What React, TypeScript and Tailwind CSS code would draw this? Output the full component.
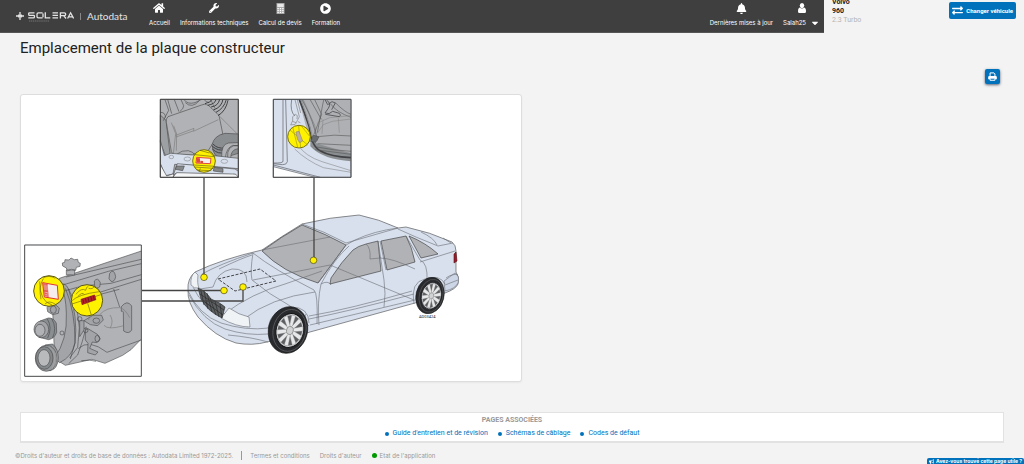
import type { ReactNode } from "react";
import { FaHome, FaWrench, FaPlayCircle, FaBell, FaCaretDown, FaExchangeAlt, FaBullhorn } from "react-icons/fa";

function NavItem({ icon, label }: { icon: ReactNode; label: ReactNode }) {
  return (
    <a href="#" className="flex flex-col items-center gap-1 text-white">
      <span className="flex h-3 items-center text-[12px]">{icon}</span>
      <span className="flex h-[9px] items-center gap-1 whitespace-nowrap font-[Inter,sans-serif] text-[6px] leading-[7px]">{label}</span>
    </a>
  );
}

function CalculatorIcon() {
  return (
    <svg viewBox="0 0 9 11" className="h-[11px] w-[9px]">
      <path d="M.5 0H8.5V11H.5Z" fill="#a9a9a9" />
      <path d="M1.3 1H7.7V4H1.3Z" fill="#e8e8e8" />
      <path d="M1.4 5.6H7.6M1.4 7.5H7.6M1.4 9.4H7.6" stroke="#fff" strokeWidth="1.1" strokeDasharray="1.4 1" />
    </svg>
  );
}

function UserIcon() {
  return (
    <svg viewBox="0 0 8 10" className="h-[10px] w-2" fill="currentColor">
      <ellipse cx="4" cy="2.6" rx="2.2" ry="2.6" />
      <path d="M1.8 4.6Q4 6.6 6.2 4.6Q8 5 8 8.4Q8 10 6.6 10H1.4Q0 10 0 8.4Q0 5 1.8 4.6Z" />
    </svg>
  );
}

function PrintIcon() {
  return (
    <svg viewBox="0 0 10 10" className="h-[9px] w-[9px]" fill="none" stroke="currentColor" strokeWidth="1.1">
      <path d="M2.3 4.6V1H6.6L7.7 2.1V4.6" />
      <path d="M.2 8V5.6Q.2 4.4 1.4 4.4H8.6Q9.8 4.4 9.8 5.6V8H7.8V6.6H2.2V8Z" fill="currentColor" stroke="none" />
      <path d="M2.3 6.9H7.7V9.2H2.3Z" />
    </svg>
  );
}

function Logo() {
  return (
    <a href="#" aria-label="Solera Autodata" className="flex h-4 items-center text-[#e4e4e4]">
      <svg viewBox="0 0 9 9" className="mr-1 h-2 w-2" stroke="currentColor" fill="none" strokeWidth="1.5">
        <path d="M0 4.5H3.2M5.8 4.5H9M4.5 0V3.4M4.5 5.6V9M2.5 3.2L4.5 4.5L6.6 3.2M2.5 5.8L4.5 4.5L6.6 5.8" />
      </svg>
      <svg viewBox="0 0 46 12" className="h-3 w-[46px]" stroke="currentColor" fill="none" strokeWidth="1.3">
        <path d="M6.5 2.8H1.5Q.7 2.8.7 3.6V4.4Q.7 5.3 1.5 5.3H5.5Q6.4 5.3 6.4 6.1V7Q6.4 7.9 5.5 7.9H.3M14.6 2.8H10.4Q9 2.8 9 4.2V6.5Q9 7.9 10.4 7.9H14.6M15 3.4V7.3M17.3 2.2V7.9H22.3M30 2.8H24.5M30 5.3H24.5M30 7.9H24.5M32.4 8.5V2.8H36.3Q37.7 2.8 37.7 4.2Q37.7 5.6 36.3 5.6H33M35.7 5.6L38 8.5M39.6 8.5L42.6 2.8L45.6 8.5M41 6.8H44.5" />
        <path d="M1 11H21" strokeWidth=".8" strokeDasharray="1.3 .6" opacity=".4" />
      </svg>
      <span className="mx-[6px] h-[7px] w-px bg-[#888]" />
      <span className="font-[Lato] text-[10px] leading-3">Autodata</span>
    </a>
  );
}

const spokes = [0, 36, 72, 108, 144, 180, 216, 252, 288, 324];

function Wheel({ x, y, rx, ry }: { x: number; y: number; rx: number; ry: number }) {
  return (
    <g transform={`translate(${x} ${y}) rotate(14) scale(${rx} ${ry})`} strokeWidth=".03">
      <ellipse rx="1" ry="1" fill="#292a2d" stroke="#111" />
      <ellipse cx=".08" rx=".84" ry=".9" fill="none" stroke="#66686a" strokeWidth=".03" />
      <ellipse cx=".1" rx=".7" ry=".73" fill="#c9cbcf" stroke="#111" strokeWidth=".04" />
      <ellipse cx=".1" rx=".62" ry=".65" fill="#5d5f62" stroke="none" />
      {spokes.map((a) => (
        <path key={a} d="M.03 -.08L0 -.66L.2 -.66L.17 -.08Z" fill="#e7e8e9" stroke="#777" strokeWidth=".015" transform={`rotate(${a} .1 0)`} />
      ))}
      <circle cx=".1" r=".17" fill="#d0d2d4" stroke="#777" />
    </g>
  );
}

function Car() {
  return (
    <g stroke="#6a6d72" strokeWidth=".6" strokeLinejoin="round" fill="none">
      <path fill="#d8e0ee" stroke="#444" d="M195 272Q222 259 262 250Q282 236 302 224Q330 217 359 215Q379 219 398 228L406 227Q430 232 452 242Q456 245 456 251L456 272Q460 277 458 284Q456 289 445 293L415 303L310 332L300 335L267 342Q252 346 236 343Q215 337 198 317Q187 302 188 290Q187 279 195 272Z" />
      <path fill="#b1b2b5" stroke="#333" d="M302 225Q326 234 346 245L318 283Q282 272 262 251Q281 237 302 225Z" />
      <path fill="#b1b2b5" stroke="#333" d="M330 284L331 278Q342 261 353 250Q358 246 366 244L378 241L381 271Z" />
      <path fill="#b1b2b5" stroke="#333" d="M381 241L406 236Q412 247 415 262L387 270Z" />
      <path fill="#b1b2b5" stroke="#333" d="M409 236Q426 243 438 254L421 258Z" />
      <path d="M302 224Q324 231 346 243L398 228M346 245L355 240Q374 231 398 228M346 245L318 283M349 246Q334 259 321 284Q317 302 319 325M378 241L384 280Q386 294 384 307M380 241L386 270M406 236L420 260Q428 263 427 281M398 229Q415 237 438 246L453 243M421 232Q434 238 437 245M443 238L451 243M420 262L455 251" />
      <path d="M262 250L330 237M253 280L330 265M202 274Q220 264 253 253M253 253Q273 269 314 290Q318 293 317 324M253 253Q250 271 252 280Q270 295 287 304Q290 306 293 308M200 289L213 287Q217 272 232 269Q247 268 247 282M224 314Q252 293 285 284L322 271M244 319Q270 298 315 292M219 269Q242 258 252 255" />
      <path d="M309 316Q350 309 412 291M309 319Q350 311 414 294M310 325L415 300M330 265L414 300" />
      <path d="M366 244Q371 248 370 259L380 258Q392 258 415 269M321 284Q328 280 331 285M309 326Q302 320 306 314" />
      <path d="M188 291Q199 315 221 323Q246 331 269 328M189 295Q203 321 225 329Q247 336 268 334M193 287Q202 309 231 316L248 327" />
      <path fill="#f0f3f6" d="M195 272L198 275Q197 284 199 288Q194 289 191 285Q190 276 195 272ZM229 308Q239 315 249 317L250 327Q236 327 221 318Z" />
      <path fill="#5e6163" stroke="#222" d="M198 288Q206 291 211 299Q221 303 225 307L222 318Q207 311 201 299Z" />
      <path stroke="#222" strokeWidth=".6" d="M201 291L204 305M204 291L208 309M207 293L212 312M210 298L216 315M215 301L219 317M220 304L222 318M200 294L224 310M202 300L223 315" />
      <path fill="#cdd6e6" d="M444 281L455 273Q460 276 458 283Q455 289 445 291Z" />
      <path d="M446 278Q453 273 458 275M445 285L458 280M268 342Q251 337 228 335" />
      <path fill="#9d1930" stroke="#511" d="M454 254L456 252L457 261L454 263Z" />
      <path d="M414 304Q410 282 425 279Q440 274 445 284M268 328Q271 309 291 307Q309 307 309 323" />
      <path stroke="#333" strokeWidth=".9" strokeDasharray="3 1.5" d="M218 279L260 269L276 281L235 291Z" />
      <Wheel x={288} y={330} rx={19.5} ry={23.5} />
      <Wheel x={430} y={295.5} rx={14} ry={18.5} />
    </g>
  );
}

function EngineBay() {
  return (
    <g transform="translate(150 90) scale(.3333)" stroke="#444" strokeWidth="1.8" fill="none">
      <path fill="#b1b2b5" d="M31 28H265V262H31Z" />
      <path fill="#9da0a3" d="M31 75L48 91L60 190L51 209L31 157Z" />
      <path fill="#b1b2b5" d="M54 80L155 45Q164 40 174 45L207 76L218 130L186 164L171 187L81 196Q67 196 64 185L49 97Q47 86 54 80Z" />
      <path stroke="#777" d="M64 98L77 131L70 192M77 136L132 115L130 124L205 89M78 141L129 123M71 107L80 132L79 182" />
      <path d="M45 29L56 61L40 92M53 28L65 71M93 29L101 47Q101 57 90 64M73 29L87 65M103 30Q113 44 135 38L155 28M106 38Q126 57 148 32M163 29Q168 38 177 37M182 29L196 57M31 67Q47 67 46 83" />
      <path stroke="#3c3e40" strokeWidth="3" d="M165 41Q184 37 185 29M173 46Q195 42 198 29M183 51Q205 48 209 28M190 60Q215 52 219 28M198 67Q222 55 229 29M204 77Q228 63 234 30" />
      <path stroke="#aaa" strokeWidth="2" d="M169 43Q190 37 192 29M180 49Q199 43 203 29M187 57Q211 50 215 29M202 72Q225 57 232 29" />
      <path stroke="#777" d="M209 79L265 135" />
      <path fill="#8b8e91" d="M186 164Q193 136 225 130L265 132V190L216 205Q190 204 186 164Z" />
      <path stroke="#404244" strokeWidth="3" d="M189 162Q202 177 225 174M187 169Q205 184 222 179M187 177Q205 194 223 187" />
      <path fill="#b1b2b5" d="M215 203Q213 162 236 159L265 158V166Q229 164 233 205ZM226 204Q229 174 248 166L265 168V176Q242 178 242 205Z" />
      <path fill="#b1b2b5" d="M80 193Q95 180 115 182Q132 186 134 196Z" />
      <path fill="#d8e0ee" d="M31 151L43 197L62 190L128 195L192 197L265 205V236L198 230L74 223L69 252L46 257L31 220Z" />
      <path fill="#f5f6f7" d="M31 224L50 258L69 252L74 247L70 262H31ZM81 247L265 251V262H68Z" />
      <path fill="#d8e0ee" d="M82 221L255 237L265 244V262Q259 249 248 252L80 248L70 255Z" />
      <path fill="#85888b" d="M80 228H103L98 242L76 238ZM192 232L219 236V247L190 243Z" />
      <g stroke="#888"><ellipse cx="64" cy="201" rx="7" ry="5" /><ellipse cx="112" cy="207" rx="10" ry="6" /><ellipse cx="223" cy="214" rx="10" ry="6" /></g>
      <circle cx="162" cy="213" r="34" fill="#fff200" stroke="#777019" strokeWidth="3" />
      <path stroke="#5f5b12" d="M135 194L193 200L176 184M133 231L190 235M140 240L184 242M150 181L178 189M132 225L195 229M151 235L147 246" />
      <path stroke="#e44737" strokeWidth="3" fill="#f6efed" d="M140 202L183 205L181 221L138 219Z" />
      <path fill="#e44737" stroke="none" d="M141 204L150 205V218H140ZM151 212L159 213V219H151Z" />
      <path d="M31 28H265V262H31Z" strokeWidth="3" />
    </g>
  );
}

function DoorOpening() {
  return (
    <g transform="translate(265 90) scale(.3333)" stroke="#4b4d4f" strokeWidth="1.8" fill="none">
      <path fill="#d8e0ee" d="M25 28H258V262H25Z" />
      <path fill="#afb0b3" stroke="none" d="M101 28H258V202Q190 197 155 178Q137 163 131 139Z" />
      <path fill="#8b8e90" stroke="none" d="M137 139L152 160L258 190V214Q171 208 136 169Z" />
      <path strokeWidth="5" stroke="#404245" d="M103 29Q119 69 133 111Q138 169 168 184Q196 200 258 203" />
      <path strokeWidth="3" stroke="#8c9093" d="M108 29Q125 75 136 115Q145 162 169 177Q203 193 258 195M115 30L149 106L157 151" />
      <path stroke="#555" d="M111 29Q137 76 148 115L157 151M149 29L170 73L147 133M135 28L169 88M176 30L168 70L157 128M211 38Q240 67 258 73M196 41Q215 67 258 82" />
      <path stroke="#888" d="M156 100L194 83L258 77M157 130L175 104L202 94L258 87M174 88L171 132M220 85L223 128" />
      <path stroke="#555" d="M157 140Q209 132 258 138M158 161L258 166M155 171Q206 181 258 184M150 179L258 193" />
      <path fill="#6a6d70" d="M145 135L162 141L152 157L137 154Z" />
      <path strokeWidth="2.5" d="M185 31Q200 39 190 55L180 69Q193 75 203 64L223 70Q230 76 223 80L181 73M180 29L188 44L201 35L211 39L200 59" />
      <path d="M54 29V213Q56 220 25 219M62 29L67 215Q65 225 52 224L25 221M80 29Q74 64 90 78" />
      <path stroke="#777" d="M90 29L103 80L91 103M97 29L107 69M90 103L77 105L82 94L93 98M83 94V80L91 73L97 77L96 87M99 95L106 98" />
      <path stroke="#888" d="M101 167Q120 198 171 215L258 242M89 177Q125 212 175 233L258 247" />
      <path fill="#fff" d="M25 230L150 262H25Z" />
      <path d="M25 225L166 262" />
      <circle cx="102" cy="140" r="34" fill="#fff200" stroke="#777019" strokeWidth="3" />
      <path stroke="#9a930d" d="M75 120L128 165M83 111L98 172M101 107L107 174M110 109L134 139" />
      <path fill="#bcae9c" stroke="#8e836b" d="M93 126L102 124L113 153L104 158L97 147Z" />
      <path d="M25 28H258V262H25Z" strokeWidth="3" />
    </g>
  );
}

function EngineBlock() {
  return (
    <g transform="translate(15 235) scale(.3333)" stroke="#444648" strokeWidth="1.8" fill="none">
      <path fill="#fff" strokeWidth="3" d="M29 30H379V424H29Z" />
      <path fill="#b1b2b5" d="M133 130L379 48V312L348 344L323 361L270 385L231 373L151 391L119 371L112 200Z" />
      <path fill="#a2a4a7" d="M137 149Q150 141 160 161Q190 246 180 325Q172 365 134 383L118 369Q158 315 154 235Q153 181 137 149Z" />
      <path d="M153 126L379 73M143 150L280 109L379 86M151 167L202 153L288 145L379 119M170 198L379 133M172 210L260 177L313 163M160 161L185 213L193 278L188 337L164 369M151 160Q181 229 180 323L166 372M214 275Q202 324 188 360L161 386M296 162L314 216M193 177L228 239M212 164L218 216M190 341Q221 310 276 352L379 315M199 377Q227 373 243 379" />
      <path fill="#b1b2b5" d="M154 105V119L179 120V105ZM143 93L142 84L149 82L150 74L162 75L168 69L178 74L188 73L190 82L196 85L195 94L184 97L182 106L169 103L157 108L154 99Z" />
      <path fill="#a2a4a7" d="M284 115Q297 98 302 125Q299 142 288 139L282 131ZM238 138Q248 125 256 143L254 156Q244 164 239 152ZM202 156Q217 146 221 163Q219 176 209 176Z" />
      <path fill="#a2a4a7" d="M319 215Q337 193 350 213V285Q342 299 326 288L325 231Q323 227 319 229Z" />
      <path fill="#a2a4a7" d="M207 257L234 241H260L265 255L248 272L226 269ZM211 285L219 281L247 298L256 312L245 323L232 321L224 340L249 351L241 360L218 353L219 325L211 315Z" />
      <ellipse cx="244" cy="257" rx="10" ry="8" /><ellipse cx="247" cy="311" rx="7" ry="10" /><circle cx="212" cy="286" r="7" /><circle cx="194" cy="252" r="7" />
      <path fill="#a2a4a7" d="M194 257L207 257V285L194 305Z" />
      <path stroke="#777" d="M254 239Q274 216 315 218Q331 222 344 248M267 271Q279 286 326 272M285 240Q297 257 286 279M224 239L221 255M202 213L190 229" />
      <circle cx="141" cy="294" r="6" />
      <path fill="#a2a4a7" d="M96 218L102 209L121 209L133 219L130 235L113 239L98 230Z" /><ellipse cx="115" cy="224" rx="9" ry="11" />
      <path fill="#8b8e91" d="M75 258L100 249Q116 248 124 265L125 292Q118 311 101 314L72 307Z" />
      <ellipse cx="79" cy="283" rx="22" ry="25" fill="#a2a4a7" /><ellipse cx="75" cy="286" rx="15" ry="18" fill="#b1b2b5" /><path d="M97 252Q113 278 98 309M110 251Q127 280 112 310" />
      <path fill="#8b8e91" d="M90 330L113 327Q130 343 130 369Q128 402 106 407L83 404Z" />
      <ellipse cx="94" cy="370" rx="33" ry="39" fill="#96999b" /><ellipse cx="88" cy="369" rx="26" ry="34" fill="#85888b" /><ellipse cx="87" cy="369" rx="18" ry="25" fill="#b9babc" /><path stroke="#aaa" d="M101 333Q132 356 111 404M110 332Q142 358 118 399" />
      <circle cx="102" cy="168" r="46" fill="#fff200" stroke="#59551a" strokeWidth="3" />
      <circle cx="216" cy="196" r="47" fill="#fff200" stroke="#59551a" strokeWidth="3" />
      <path stroke="#665f12" d="M74 139Q73 199 111 210M84 129Q102 119 121 130M85 131Q70 155 78 193M90 207Q102 194 123 209M170 198Q190 178 253 170M171 207L261 178M183 178Q199 157 212 166Q214 155 220 154M188 185Q203 169 208 179M221 160Q234 164 238 153M218 205L229 240" />
      <path fill="#f6ecec" stroke="#df3231" strokeWidth="3" d="M83 143L127 151L130 193L88 186Z" />
      <path fill="#e75d56" stroke="none" d="M84 144L98 146L101 186L89 184Z" /><path stroke="#eee" d="M90 149V165M96 151V166M91 172L99 174M91 179L98 180" />
      <path fill="#b5202b" stroke="#7c1820" d="M198 193L239 180L243 194L201 209Z" />
      <path stroke="#711820" strokeWidth="3" d="M204 193L206 204M211 190L214 202M219 187L222 201M227 184L231 198M235 182L238 195" />
    </g>
  );
}

function Diagram() {
  return (
    <svg viewBox="21 95 500 286" className="block h-auto w-full" role="img" aria-label="Emplacement de la plaque constructeur">
      <Car />
      <EngineBay />
      <DoorOpening />
      <EngineBlock />
      <g fill="none" stroke="#444" strokeWidth="1.3">
        <path d="M204 178V275M314 178V259M142 290.5H223M142 301H243V288" />
      </g>
      <g fill="#fff200" stroke="#4c4814" strokeWidth=".7">
        <circle cx="204" cy="277.3" r="3.3" /><circle cx="224" cy="290.5" r="3.3" /><circle cx="243" cy="287" r="3.3" /><circle cx="313.5" cy="260.3" r="3.3" />
      </g>
      <text x="419" y="318.3" fill="#222" className="font-[Roboto] text-[4px]">AD03424</text>
    </svg>
  );
}

const related = ["Guide d'entretien et de révision", "Schémas de câblage", "Codes de défaut"];

export default function App() {
  return (
    <div className="flex min-h-screen flex-col overflow-hidden bg-[#f3f3f3] font-[Roboto,sans-serif] text-[#212121]">
      <header className="flex items-start">
        <nav className="flex h-[33px] flex-1 items-start border-b border-[#555] bg-[#3f3f3f] pl-4 pr-1">
          <div className="mt-2 w-[133px]"><Logo /></div>
          <div className="mt-[2px] flex gap-[10px]">
            <NavItem icon={<FaHome />} label="Accueil" />
            <NavItem icon={<FaWrench className="text-[10px]" />} label="Informations techniques" />
            <NavItem icon={<CalculatorIcon />} label="Calcul de devis" />
            <NavItem icon={<FaPlayCircle className="text-[11px]" />} label="Formation" />
          </div>
          <div className="ml-auto mt-[2px] flex gap-[10px]">
            <NavItem icon={<FaBell className="text-[11px]" />} label="Dernières mises à jour" />
            <NavItem icon={<UserIcon />} label={<>Salah25 <FaCaretDown className="text-[10px]" /></>} />
          </div>
        </nav>
        <div className="flex h-[33px] w-[200px] items-start justify-between pl-2 pr-2">
          <div className="-mt-[2px] text-[7px] leading-[9px]">
            <p className="font-bold">Volvo</p>
            <p className="font-bold">960</p>
            <p className="text-[#b5b5b5]">2.3 Turbo</p>
          </div>
          <button className="mt-[2px] flex h-[17px] items-center gap-[3px] whitespace-nowrap rounded-[2px] bg-[#0072bc] px-[3px] text-[6px] font-bold text-white">
            <FaExchangeAlt className="text-[11px]" /> Changer véhicule
          </button>
        </div>
      </header>

      <main className="px-5">
        <h1 className="mt-[6px] text-[15px] leading-[19px]">Emplacement de la plaque constructeur</h1>
        <div className="mt-[11px] flex justify-end pr-1">
          <button aria-label="Imprimer" className="flex h-[15px] w-[15px] items-center justify-center rounded-[2px] bg-[#0072bc] text-white shadow-sm shadow-gray-500">
            <PrintIcon />
          </button>
        </div>
        <section className="mt-[10px] w-full max-w-[502px] rounded-[3px] border border-[#ddd] bg-white shadow-xs">
          <Diagram />
        </section>
        <section className="mt-[30px] flex flex-col items-center gap-1 border border-b-2 border-[#e2e2e2] bg-white pt-[3px] pb-[3px] text-[7px] leading-[9px]">
          <h2 className="font-bold text-[#999]">PAGES ASSOCIÉES</h2>
          <ul className="flex gap-[10px] text-[#0072bc]">
            {related.map((name) => (
              <li key={name} className="flex items-center gap-1">
                <span className="h-1 w-1 rounded-full bg-[#0072bc]" />
                <a href="#">{name}</a>
              </li>
            ))}
          </ul>
        </section>
      </main>

      <footer className="mt-2 flex flex-1 items-start pl-[15px] font-[Inter,sans-serif] text-[6px] leading-[9px] text-[#999]">
        <p>©Droits d'auteur et droits de base de données : Autodata Limited 1972-2025.</p>
        <div className="ml-2 flex items-center gap-[10px] border-l border-[#999] pl-2">
          <a href="#">Termes et conditions</a>
          <a href="#">Droits d'auteur</a>
          <a href="#" className="flex items-center gap-[3px]"><span className="h-[5px] w-[5px] rounded-full bg-[#009a00]" />Etat de l'application</a>
        </div>
        <button className="ml-auto flex items-center gap-[2px] self-end whitespace-nowrap rounded-t-[2px] bg-[#0072bc] px-[2px] text-[5px] leading-[6px] font-bold text-white">
          <FaBullhorn /> Avez-vous trouvé cette page utile ?
        </button>
      </footer>
    </div>
  );
}
